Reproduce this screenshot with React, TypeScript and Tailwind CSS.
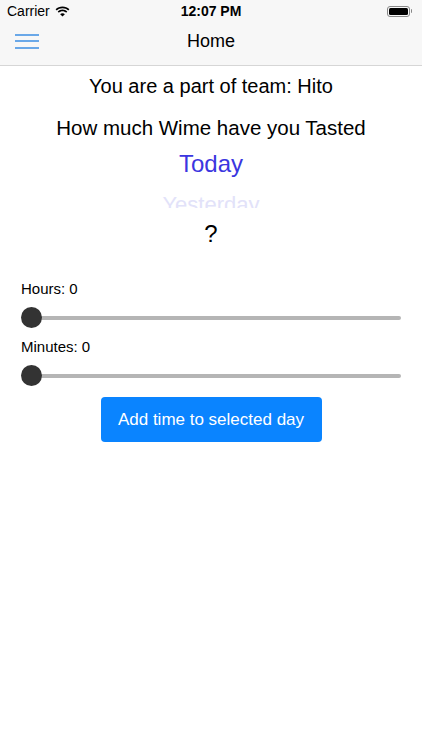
import React from "react";

function Wifi() {
  return (
    <svg width="15" height="11" viewBox="0 0 15 11">
      <path d="M7.5 2.2c2.2 0 4.2.85 5.7 2.25l1.2-1.25C12.6 1.45 10.150.4 7.5.4S2.4 1.45.6 3.2l1.2 1.25C3.3 3.05 5.3 2.2 7.5 2.2z" fill="#000" />
      <path d="M7.5 5.2c1.4 0 2.65.55 3.6 1.45l1.2-1.25C11.05 4.2 9.35 3.45 7.5 3.45S3.950 4.2 2.7 5.4l1.2 1.25C4.85 5.75 6.1 5.2 7.5 5.2z" fill="#000" />
      <path d="M7.5 10.6l2.35-2.45C9.25 7.55 8.4 7.2 7.5 7.2s-1.75.35-2.35.95z" fill="#000" />
    </svg>
  );
}

function Battery() {
  return (
    <div className="flex items-center">
      <div className="w-[23px] h-[11px] rounded-[3px] border border-[#888] p-[1px]">
        <div className="w-full h-full bg-black rounded-[1.5px]" />
      </div>
      <div className="w-[1.5px] h-[4px] bg-[#888] rounded-r-sm ml-[1px]" />
    </div>
  );
}

function Slider() {
  return (
    <div className="relative h-[22px] mx-[21px] flex items-center">
      <div className="w-full h-[4px] rounded-full bg-[#b5b5b5] ml-[10px]" />
      <div className="absolute left-0 top-0 w-[21px] h-[21px] rounded-full bg-[#333333]" />
    </div>
  );
}

export default function App() {
  return (
    <div
      className="w-[422px] h-[750px] bg-white flex flex-col"
      style={{ fontFamily: '"Liberation Sans", Arial, sans-serif' }}
    >
      <div className="bg-[#f7f7f7] border-b border-[#d6d6d6]">
        <div className="relative h-[22px] flex items-center px-[7px] text-[14px] text-black">
          <div className="flex items-center gap-[5px]">
            <span>Carrier</span>
            <Wifi />
          </div>
          <div className="absolute left-0 right-0 top-0 h-[22px] flex items-center justify-center font-bold text-[14px]">
            12:07 PM
          </div>
          <div className="ml-auto mr-[3px]">
            <Battery />
          </div>
        </div>
        <div className="relative h-[43px] flex items-center pb-[5px]">
          <div className="ml-[15px] flex flex-col gap-[4.5px]">
            <div className="w-[24px] h-[2px] bg-[#6aa8e8]" />
            <div className="w-[24px] h-[2px] bg-[#6aa8e8]" />
            <div className="w-[24px] h-[2px] bg-[#6aa8e8]" />
          </div>
          <div className="absolute inset-0 pb-[5px] flex items-center justify-center text-[18px] text-black">
            Home
          </div>
        </div>
      </div>

      <div className="flex flex-col items-center text-black">
        <div className="mt-[8px] text-[20px] leading-[24px]">You are a part of team: Hito</div>
        <div className="mt-[18px] text-[20.5px] leading-[24px]">How much Wime have you Tasted</div>
        <div className="h-[68px] overflow-hidden flex flex-col items-center">
          <div className="mt-[10px] text-[24px] leading-[28px] text-[#3b36e0]">Today</div>
          <div className="mt-[14px] text-[22px] leading-[26px] text-[#e2e2f9]">Yesterday</div>
        </div>
        <div className="mt-[12px] text-[24px] leading-[28px]">?</div>
      </div>

      <div className="mt-[32px] ml-[21px] text-[15px] leading-[18px] text-black">Hours: 0</div>
      <div className="mt-[9px]">
        <Slider />
      </div>
      <div className="mt-[9px] ml-[21px] text-[15px] leading-[18px] text-black">Minutes: 0</div>
      <div className="mt-[9px]">
        <Slider />
      </div>
      <div className="flex justify-center mt-[10px]">
        <button className="w-[221px] h-[45px] rounded-[4px] bg-[#0a84ff] text-white text-[17px]">
          Add time to selected day
        </button>
      </div>
    </div>
  );
}
